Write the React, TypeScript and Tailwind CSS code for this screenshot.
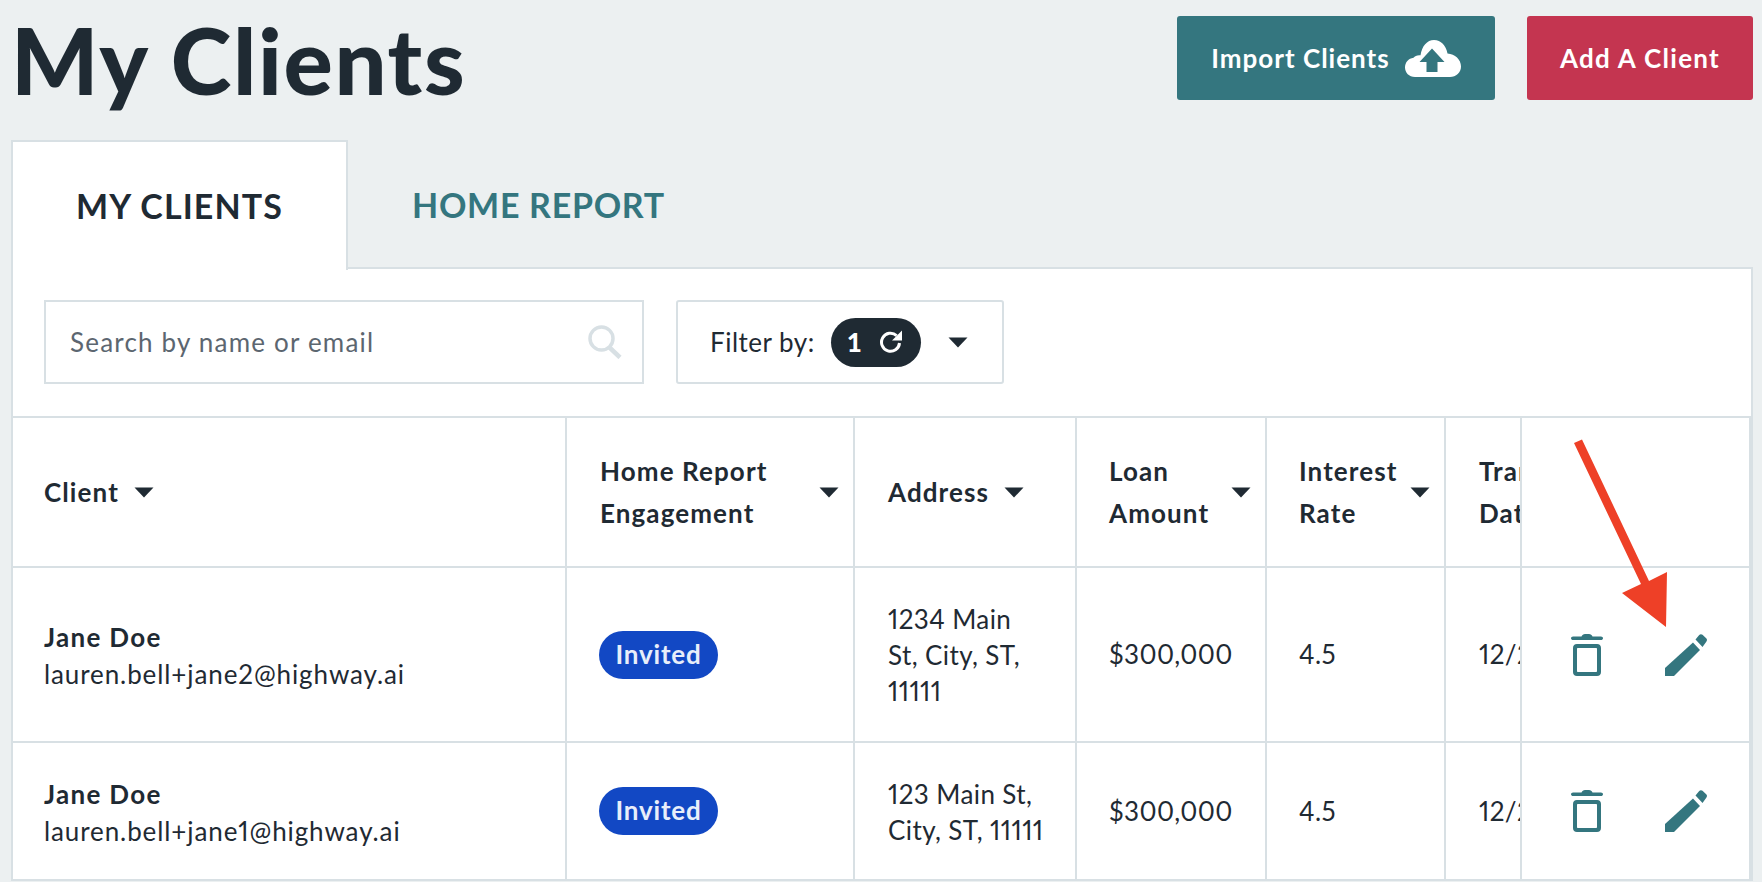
const Caret = ({ className = "" }: { className?: string }) => (
  <svg viewBox="0 0 20 11" className={`w-[20px] h-[11px] shrink-0 fill-[#1f2a33] ${className}`}>
    <path d="M0.5 0.5h19L10 10.5z" />
  </svg>
);

const Trash = () => (
  <svg viewBox="0 0 32 42" className="w-[32px] h-[42px] fill-[#34767f]">
    <path d="M10.500 2.500C11 1 12.500 0 14 0h4c1.500 0 3 1 3.500 2.500h8.500c1 0 2 .8 2 1.700S31 6 30 6H2C1 6 0 5.100 0 4.200S1 2.500 2 2.500z" />
    <path fillRule="evenodd" d="M6 10h20c2.500 0 4 1.500 4 4v24c0 2.500-1.500 4-4 4H6c-2.500 0-4-1.500-4-4V14c0-2.500 1.500-4 4-4zm1 4c-.6 0-1 .4-1 1v22c0 .6.400 1 1 1h18c.6 0 1-.4 1-1V15c0-.6-.4-1-1-1z" />
  </svg>
);

const Pencil = () => (
  <svg viewBox="0 0 42 42" className="w-[42px] h-[42px] fill-[#34767f]">
    <path d="M0 34L28 8.500l7 7.500L9 42H0z" />
    <path d="M30.500 5.500l3.500-4.300c1-1.200 2.500-1.400 3.500-.4l3.700 3.400c1 1 1.100 2.400.1 3.500L37.500 13z" />
  </svg>
);

const Search = () => (
  <svg viewBox="0 0 34 34" className="w-[34px] h-[34px] fill-none stroke-[#d8e0e4]">
    <circle cx="13.500" cy="13.500" r="11.500" strokeWidth="3.500" />
    <path d="M21.500 22.500L32 32.500" strokeWidth="4.500" />
  </svg>
);

const Cloud = () => (
  <svg viewBox="0 0 56 37" className="w-[56px] h-[37px]">
    <path
      className="fill-white"
      d="M10 37C4 37 0 32.500 0 27.500c0-5 3.500-9 8.500-9.700C10 16 12 15 15.500 15.300 17 6 22 0 29 0c7 0 12 5.500 13.500 13.500C50 14 56 19.500 56 26.500 56 32.500 51 37 45 37z"
    />
    <path className="fill-[#34767f]" d="M27 8.500l12.500 13.500H32.500v10h-11V22H14.500z" />
  </svg>
);

const Refresh = () => (
  <svg viewBox="0 0 24 24" className="w-[24px] h-[24px] fill-none stroke-white">
    <path d="M20.500 13a9 9 0 1 1-2.900-7.400" strokeWidth="3" />
    <path d="M23 0.500v10h-10z" className="fill-white" strokeWidth="0" />
  </svg>
);

const Invited = () => (
  <span className="inline-flex items-center justify-center w-[119px] h-[48px] rounded-[24px] bg-[#1248c4] text-[#e8eefa] text-[26px] leading-[26px] pb-[2px] font-bold tracking-[0.8px]">
    Invited
  </span>
);

const cell = "border-r-2 border-b-2 border-[#d8e0e4] min-w-0 overflow-hidden flex items-center";
const body = "text-[26px] tracking-[0.9px] proportional-nums";
const tight = "text-[26px] tracking-[0.4px] proportional-nums";

const Row = ({
  h,
  email,
  address,
  textPt,
}: {
  h: string;
  email: string;
  address: string[];
  textPt: string;
}) => (
  <div className={`grid grid-cols-[554px_288px_222px_190px_179px_76px_229px] ${h}`}>
    <div className={`${cell} pl-[31px]`}>
      <div className={`${body} leading-[37px] whitespace-nowrap ${textPt}`}>
        <div className="font-bold tracking-[1.3px]">Jane Doe</div>
        <div>{email}</div>
      </div>
    </div>
    <div className={`${cell} pl-[32px]`}>
      <Invited />
    </div>
    <div className={`${cell} pl-[33px]`}>
      <div className={`${tight} leading-[36px] whitespace-nowrap ${textPt === "pt-[4px]" ? "pt-[2px]" : ""}`}>
        {address.map((a) => (
          <div key={a}>{a}</div>
        ))}
      </div>
    </div>
    <div className={`${cell} pl-[32px] ${tight}`}>$300,000</div>
    <div className={`${cell} pl-[32px] ${tight}`}>4.5</div>
    <div className={`${cell} pl-[33px] ${tight} whitespace-nowrap`}>12/21/2021</div>
    <div className={`${cell} border-r-0 pl-[49px] gap-[62px]`}>
      <Trash />
      <Pencil />
    </div>
  </div>
);

const Head = ({
  lines,
  caret,
  pl,
  near,
}: {
  lines: string[];
  caret?: boolean;
  pl: string;
  near?: boolean;
}) => (
  <div className={`${cell} ${pl} pr-[14px] ${near ? "gap-[15px]" : "justify-between"}`}>
    <div className="font-bold text-[26px] leading-[42px] tracking-[1.1px] whitespace-nowrap">
      {lines.map((l) => (
        <div key={l}>{l}</div>
      ))}
    </div>
    {caret && <Caret />}
  </div>
);

export default function App() {
  return (
    <div className="relative w-[1762px] h-[882px] overflow-hidden bg-[#ecf0f1] text-[#1f2a33] font-['Lato','Liberation_Sans',sans-serif]">
      <header className="flex justify-between h-[140px] pl-[11px] pr-[9px] pt-[16px]">
        <h1 className="text-[92px] leading-[92px] font-black tracking-[1.6px] whitespace-nowrap -mt-[2px]">My Clients</h1>
        <div className="flex gap-[32px] h-[84px]">
          <button className="w-[318px] rounded-[3px] bg-[#34767f] text-white text-[26px] font-bold tracking-[1px] flex items-center justify-center gap-[15px]">
            Import Clients
            <Cloud />
          </button>
          <button className="w-[226px] rounded-[3px] bg-[#c43550] text-white text-[26px] font-bold tracking-[1.300px] flex items-center justify-center">
            Add A Client
          </button>
        </div>
      </header>

      <main className="ml-[11px] w-[1742px]">
        <div className="flex h-[129px] items-stretch">
          <div className="w-[337px] bg-white border-2 border-b-0 border-[#d8e0e4] flex items-center justify-center pb-[2px] text-[34px] font-bold tracking-[1.1px] -mb-[1px] relative z-10">
            MY CLIENTS
          </div>
          <div className="flex-1 border-b-2 border-[#d8e0e4] flex items-center pl-[64px] pt-[2px] text-[34px] font-bold tracking-[0.7px] text-[#34767f]">
            HOME REPORT
          </div>
        </div>

        <div className="bg-white border-l-2 border-r-2 border-[#d8e0e4]">
          <div className="flex gap-[32px] pl-[31px] pt-[31px] pb-[32px] border-b-2 border-[#d8e0e4]">
            <div className="w-[600px] h-[84px] border-2 border-[#d8e0e4] flex items-center justify-between pl-[24px] pr-[20px]">
              <span className="text-[26px] tracking-[1.200px] text-[#5c6670]">Search by name or email</span>
              <Search />
            </div>
            <div className="w-[328px] h-[84px] border-2 border-[#d8e0e4] rounded-[3px] flex items-center pl-[32px]">
              <span className="text-[26px] tracking-[0.5px] whitespace-nowrap mr-[16px]">Filter by:</span>
              <span className="w-[90px] h-[49px] rounded-[25px] bg-[#1f2a33] flex items-center pl-[16px] gap-[17px] text-white text-[26px] font-black">
                1
                <Refresh />
              </span>
              <Caret className="ml-[27px] w-[18px] h-[10px]" />
            </div>
          </div>

          <div className="grid grid-cols-[554px_288px_222px_190px_179px_76px_229px] h-[150px]">
            <Head lines={["Client"]} caret pl="pl-[31px]" near />
            <Head lines={["Home Report", "Engagement"]} caret pl="pl-[33px]" />
            <Head lines={["Address"]} caret pl="pl-[33px]" near />
            <Head lines={["Loan", "Amount"]} caret pl="pl-[32px]" />
            <Head lines={["Interest", "Rate"]} caret pl="pl-[32px]" />
            <Head lines={["Transaction", "Date"]} pl="pl-[33px]" />
            <div className={`${cell} border-r-0`} />
          </div>
          <Row h="h-[175px]" textPt="pt-[2px]" email="lauren.bell+jane2@highway.ai" address={["1234 Main", "St, City, ST,", "11111"]} />
          <Row h="h-[138px]" textPt="pt-[4px]" email="lauren.bell+jane1@highway.ai" address={["123 Main St,", "City, ST, 11111"]} />
        </div>
      </main>

      <svg className="absolute left-[1570px] top-[435px] w-[105px] h-[200px] fill-[#ee4027] pointer-events-none" viewBox="1570 435 105 200">
        <path d="M1574 443L1582 439.500L1649 581L1667 572L1666 627L1622 593L1641 584z" />
      </svg>
    </div>
  );
}
